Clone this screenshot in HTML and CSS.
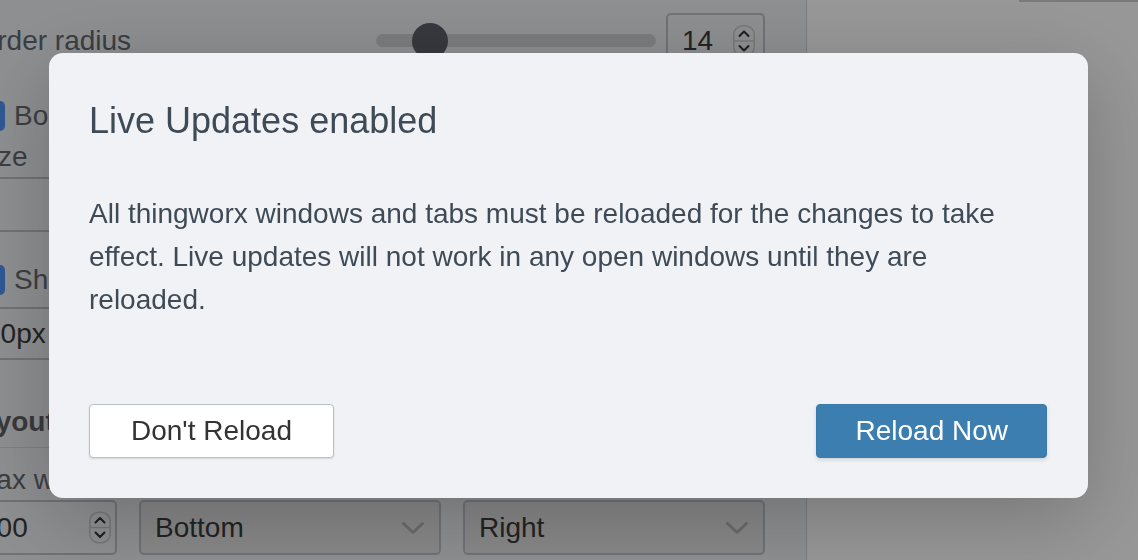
FILE: index.html
```html
<!DOCTYPE html>
<html lang="en">
<head>
    <meta charset="UTF-8">
    <meta name="viewport" content="width=device-width, initial-scale=1.0">
    <title>Live Updates</title>
    <link rel="stylesheet" href="styles.css">
</head>
<body>
    <div class="page">
        <aside class="panel">
            <div class="row row-radius">
                <span class="label grow">Border radius</span>
                <div class="slider"><div class="slider-thumb"></div></div>
                <div class="field number number-top">
                    <span>14</span>
                    <svg class="spinner" viewBox="0 0 22 32" width="22" height="32">
                        <rect x="0.75" y="0.75" width="20.5" height="30.5" rx="9" fill="none" stroke="#c6c6c6" stroke-width="1.5"/>
                        <line x1="1" y1="16" x2="21" y2="16" stroke="#c6c6c6" stroke-width="1.5"/>
                        <path d="M6.5 11 L11 6.5 L15.5 11" fill="none" stroke="#333" stroke-width="2" stroke-linecap="round" stroke-linejoin="round"/>
                        <path d="M6.5 21 L11 25.5 L15.5 21" fill="none" stroke="#333" stroke-width="2" stroke-linecap="round" stroke-linejoin="round"/>
                    </svg>
                </div>
            </div>

            <label class="check-row row-border">
                <svg class="checkbox" viewBox="0 0 30 30" width="30" height="30">
                    <rect x="0" y="0" width="30" height="30" rx="5" fill="#4f92f5"/>
                    <path d="M8 15.5 L13 20.5 L22 10" fill="none" stroke="#fff" stroke-width="3" stroke-linecap="round" stroke-linejoin="round"/>
                </svg>
                <span class="label">Border</span>
            </label>

            <div class="label field-label row-size">Size</div>
            <div class="field text-input row-size-input"></div>

            <label class="check-row row-shadow">
                <svg class="checkbox" viewBox="0 0 30 30" width="30" height="30">
                    <rect x="0" y="0" width="30" height="30" rx="5" fill="#4f92f5"/>
                    <path d="M8 15.5 L13 20.5 L22 10" fill="none" stroke="#fff" stroke-width="3" stroke-linecap="round" stroke-linejoin="round"/>
                </svg>
                <span class="label">Shadow</span>
            </label>
            <div class="field text-input row-shadow-input">10px 10px 30px rgba(0, 0, 0, 0.3)</div>

            <h2 class="section">Layout</h2>
            <div class="label field-label row-max">Max width</div>
            <div class="row row-layout">
                <div class="field number number-bottom">
                    <span>300</span>
                    <svg class="spinner" viewBox="0 0 22 32" width="22" height="33">
                        <rect x="0.75" y="0.75" width="20.5" height="30.5" rx="9" fill="none" stroke="#c6c6c6" stroke-width="1.5"/>
                        <line x1="1" y1="16" x2="21" y2="16" stroke="#c6c6c6" stroke-width="1.5"/>
                        <path d="M6.5 11 L11 6.5 L15.5 11" fill="none" stroke="#333" stroke-width="2" stroke-linecap="round" stroke-linejoin="round"/>
                        <path d="M6.5 21 L11 25.5 L15.5 21" fill="none" stroke="#333" stroke-width="2" stroke-linecap="round" stroke-linejoin="round"/>
                    </svg>
                </div>
                <div class="field select">
                    <span>Bottom</span>
                    <svg class="chevron" viewBox="0 0 24 14" width="24" height="14">
                        <path d="M2.5 2.5 L12 11.5 L21.5 2.5" fill="none" stroke="#b3b3b3" stroke-width="3" stroke-linecap="round" stroke-linejoin="round"/>
                    </svg>
                </div>
                <div class="field select">
                    <span>Right</span>
                    <svg class="chevron" viewBox="0 0 24 14" width="24" height="14">
                        <path d="M2.5 2.5 L12 11.5 L21.5 2.5" fill="none" stroke="#b3b3b3" stroke-width="3" stroke-linecap="round" stroke-linejoin="round"/>
                    </svg>
                </div>
            </div>
        </aside>
        <main class="preview">
            <div class="preview-bar"></div>
        </main>
    </div>

    <div class="overlay">
        <div class="dialog">
            <h1 class="dialog-title">Live Updates enabled</h1>
            <p class="dialog-text">All thingworx windows and tabs must be reloaded for the changes to take effect. Live updates will not work in any open windows until they are reloaded.</p>
            <div class="dialog-actions">
                <button type="button" class="btn btn-secondary">Don't Reload</button>
                <button type="button" class="btn btn-primary">Reload Now</button>
            </div>
        </div>
    </div>
</body>
</html>
```

FILE: styles.css
```css
body {
    margin: 0;
    font-family: "Liberation Sans", Arial, sans-serif;
    overflow: hidden;
}
.page {
    display: flex;
    height: 100vh;
    background-color: #fcfcfc;
}
.panel {
    flex-shrink: 0;
    box-sizing: border-box;
    width: 844px;
    margin-left: -37px;
    padding-right: 41px;
    background-color: #eceef0;
    border-right: 1px solid #ccd0d6;
    font-size: 28px;
    color: #626870;
}
.label {
    line-height: 32px;
    white-space: nowrap;
}
.field-label {
    padding-left: 10px;
}
.grow {
    flex: 1;
}
.row {
    display: flex;
    align-items: center;
}
.row-radius {
    margin-top: 13px;
    height: 55px;
}
.slider {
    display: flex;
    align-items: center;
    width: 280px;
    height: 13px;
    margin-right: 10px;
    border-radius: 7px;
    background-color: #cdcfd3;
}
.slider-thumb {
    flex-shrink: 0;
    width: 36px;
    height: 36px;
    margin-left: 36px;
    border-radius: 50%;
    background-color: #5a5e66;
}
.field {
    box-sizing: border-box;
    display: flex;
    align-items: center;
    border: 2px solid #b8bfc7;
    border-radius: 5px;
    color: #3a3a3a;
    white-space: nowrap;
    overflow: hidden;
}
.number {
    justify-content: space-between;
    height: 55px;
    padding: 0 8px 0 14px;
}
.number-top {
    width: 99px;
}
.number-bottom {
    width: 154px;
    padding-left: 16px;
    padding-right: 4px;
}
.spinner {
    flex-shrink: 0;
}
.check-row {
    display: flex;
    align-items: center;
    gap: 9px;
    height: 32px;
    padding-left: 12px;
}
.checkbox {
    flex-shrink: 0;
}
.row-border {
    margin-top: 32px;
}
.row-size {
    margin-top: 9px;
}
.text-input {
    padding-left: 20px;
}
.row-size-input {
    margin-top: 4px;
    height: 55px;
}
.row-shadow {
    margin-top: 32px;
}
.row-shadow-input {
    margin-top: 11px;
    height: 53px;
    word-spacing: -3px;
}
.section {
    margin: 46px 0 0;
    padding-bottom: 9px;
    font-size: 28px;
    line-height: 32px;
    color: #5c6066;
    border-bottom: 1px solid #d2d4d7;
}
.row-max {
    margin-top: 16px;
}
.row-layout {
    gap: 22px;
    margin-top: 4px;
    height: 55px;
}
.select {
    justify-content: space-between;
    width: 302px;
    height: 55px;
    padding: 0 14px;
    background-color: #e2e2e4;
}
.preview {
    flex: 1;
    display: flex;
    flex-direction: column;
    align-items: flex-end;
}
.preview-bar {
    width: 119px;
    height: 2px;
    background-color: #cbcbcb;
}
.overlay {
    position: fixed;
    inset: 0;
    display: flex;
    align-items: flex-start;
    padding: 53px 0 0 49px;
    background-color: rgba(0, 0, 0, 0.4);
}
.dialog {
    box-sizing: border-box;
    width: 1039px;
    padding: 46px 40px 40px;
    background-color: #f1f2f6;
    border-radius: 14px;
    box-shadow: 0 20px 80px rgba(0, 0, 0, 0.22);
    color: #3e4b57;
}
.dialog-title {
    margin: 0;
    font-size: 36px;
    font-weight: normal;
    line-height: 43px;
}
.dialog-text {
    margin: 50px 0 0;
    font-size: 28px;
    line-height: 43px;
}
.dialog-actions {
    display: flex;
    justify-content: space-between;
    margin-top: 83px;
}
.btn {
    height: 54px;
    padding: 0 41px;
    font-family: inherit;
    font-size: 28px;
    border-radius: 4px;
    cursor: pointer;
}
.btn-secondary {
    background-color: #fff;
    color: #333;
    border: 1px solid #b6c1c8;
    box-shadow: 0 1px 2px rgba(0, 0, 0, 0.12);
}
.btn-primary {
    margin-right: 1px;
    padding: 0 38px;
    background-color: #3d7eb1;
    color: #fff;
    border: 1px solid #3a7aad;
    box-shadow: 0 2px 4px rgba(0, 0, 0, 0.12);
}
```
